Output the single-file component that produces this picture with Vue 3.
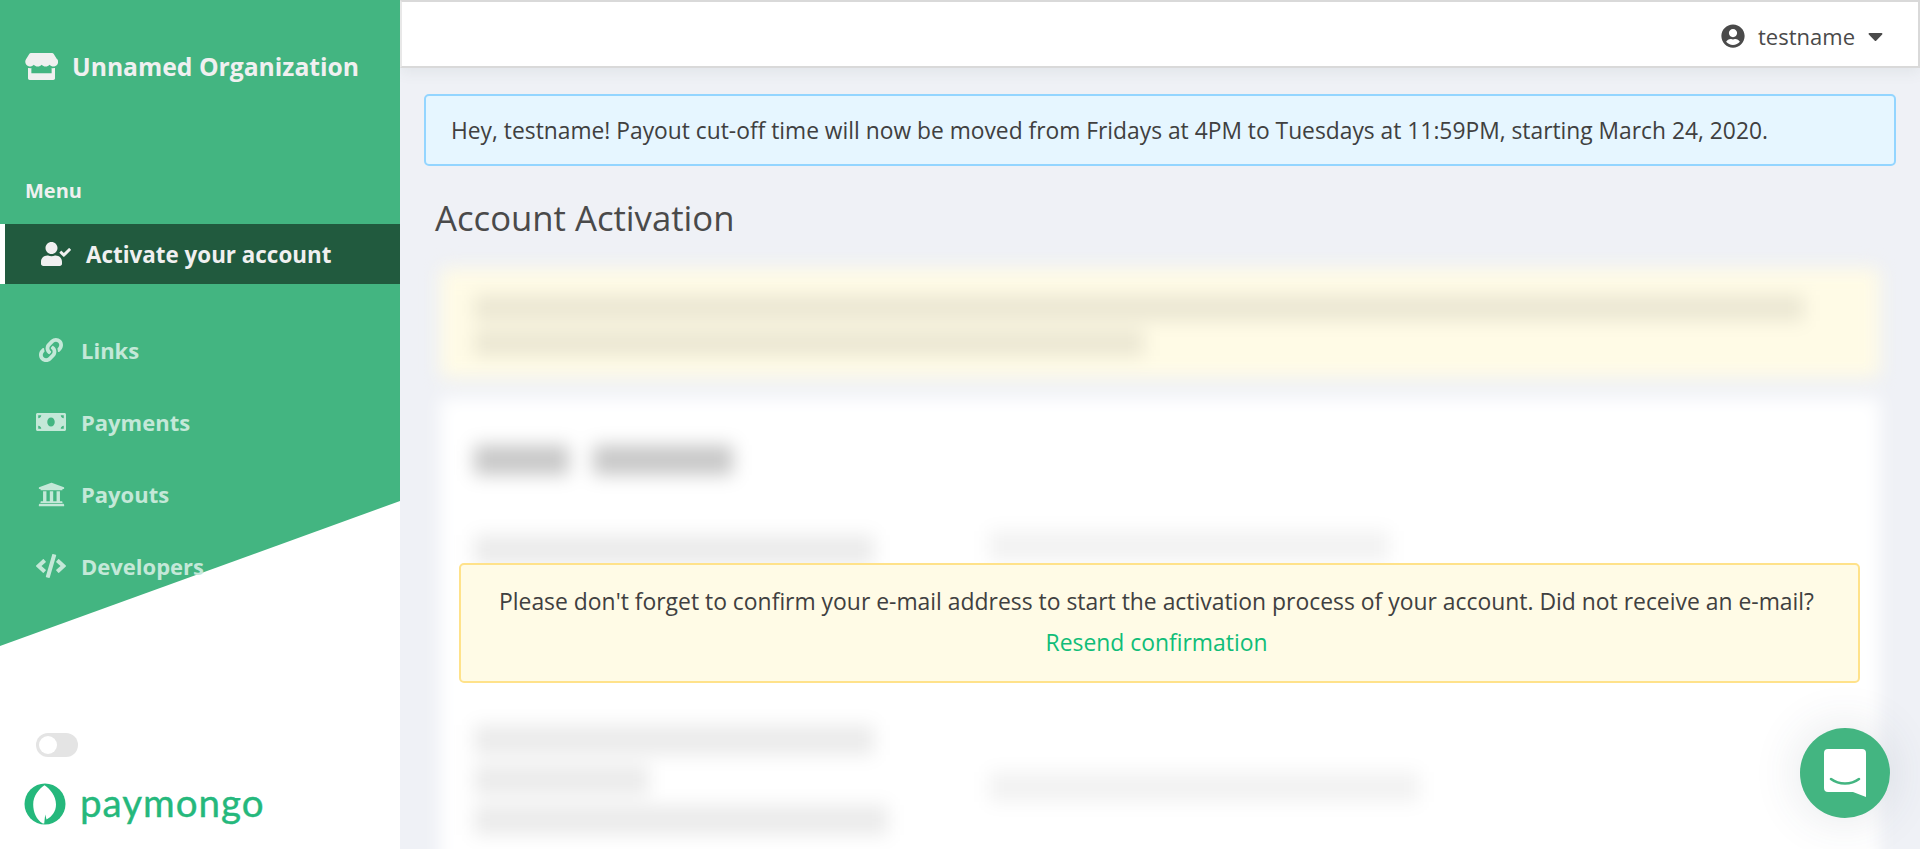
<script setup>
const navItems = [
  { label: 'Links', view: '0 0 512 512', w: 24, h: 24, d: 'M326.612 185.391c59.747 59.809 58.927 155.698.36 214.59-.11.12-.24.25-.36.37l-67.2 67.2c-59.27 59.27-155.699 59.262-214.96 0-59.27-59.26-59.27-155.7 0-214.96l37.106-37.106c9.84-9.84 26.786-3.3 27.294 10.606.648 17.722 3.826 35.527 9.69 52.721 1.986 5.822.567 12.262-3.783 16.612l-13.087 13.087c-28.026 28.026-28.905 73.66-1.155 101.96 28.024 28.579 74.086 28.749 102.325.51l67.2-67.19c28.191-28.191 28.073-73.757 0-101.83-3.701-3.694-7.429-6.564-10.341-8.569a16.037 16.037 0 0 1-6.947-12.606c-.396-10.567 3.348-21.456 11.698-29.806l21.054-21.055c5.521-5.521 14.182-6.199 20.584-1.731a152.482 152.482 0 0 1 20.522 17.197zM467.547 44.449c-59.261-59.262-155.69-59.27-214.96 0l-67.2 67.2c-.12.12-.25.25-.36.37-58.566 58.892-59.387 154.781.36 214.59a152.454 152.454 0 0 0 20.521 17.196c6.402 4.468 15.064 3.789 20.584-1.731l21.054-21.055c8.35-8.35 12.094-19.239 11.698-29.806a16.037 16.037 0 0 0-6.947-12.606c-2.912-2.005-6.64-4.875-10.341-8.569-28.073-28.073-28.191-73.639 0-101.83l67.2-67.19c28.239-28.239 74.3-28.069 102.325.51 27.75 28.3 26.872 73.934-1.155 101.96l-13.087 13.087c-4.35 4.35-5.769 10.79-3.783 16.612 5.864 17.194 9.042 34.999 9.69 52.721.509 13.906 17.454 20.446 27.294 10.606l37.106-37.106c59.271-59.259 59.271-155.699.001-214.959z' },
  { label: 'Payments', view: '0 0 640 512', w: 30, h: 24, d: 'M608 64H32C14.33 64 0 78.33 0 96v320c0 17.67 14.33 32 32 32h576c17.67 0 32-14.33 32-32V96c0-17.67-14.33-32-32-32zM48 400v-64c35.35 0 64 28.65 64 64H48zm0-224v-64h64c0 35.35-28.65 64-64 64zm272 176c-44.19 0-80-42.99-80-96 0-53.02 35.82-96 80-96s80 42.98 80 96c0 53.03-35.83 96-80 96zm272 48h-64c0-35.35 28.65-64 64-64v64zm0-224c-35.35 0-64-28.65-64-64h64v64z' },
  { label: 'Payouts', view: '0 0 512 512', w: 27, h: 27, d: 'M496 128v16a8 8 0 0 1-8 8h-24v12c0 6.627-5.373 12-12 12H60c-6.627 0-12-5.373-12-12v-12H24a8 8 0 0 1-8-8v-16a8 8 0 0 1 4.941-7.392l232-88a7.996 7.996 0 0 1 6.118 0l232 88A8 8 0 0 1 496 128zm-24 304H40c-13.255 0-24 10.745-24 24v16a8 8 0 0 0 8 8h464a8 8 0 0 0 8-8v-16c0-13.255-10.745-24-24-24zM96 192v192H60c-6.627 0-12 5.373-12 12v20h416v-20c0-6.627-5.373-12-12-12h-36V192h-64v192h-64V192h-64v192h-64V192H96z' },
  { label: 'Developers', view: '0 0 640 512', w: 30, h: 24, d: 'M278.9 511.5l-61-17.7c-6.4-1.8-10-8.5-8.2-14.9L346.2 8.7c1.8-6.4 8.5-10 14.9-8.2l61 17.7c6.4 1.8 10 8.5 8.2 14.9L293.8 503.3c-1.9 6.4-8.5 10.1-14.9 8.2zm-114-112.2l43.5-46.4c4.6-4.9 4.3-12.7-.8-17.2L117 256l90.6-79.7c5.1-4.5 5.5-12.3.8-17.2l-43.5-46.4c-4.5-4.8-12.1-5.1-17-.5L3.8 247.2c-5.1 4.7-5.1 12.8 0 17.5l144.1 135.1c4.9 4.6 12.5 4.4 17-.5zm327.2.6l144.1-135.1c5.1-4.7 5.1-12.8 0-17.5L492.1 112.1c-4.8-4.5-12.4-4.3-17 .5L431.6 159c-4.6 4.9-4.3 12.7.8 17.2L523 256l-90.6 79.7c-5.1 4.5-5.5 12.3-.8 17.2l43.5 46.4c4.5 4.9 12.1 5.1 17 .6z' }
]
</script>

<template>
  <div class="app">
    <aside class="sidebar">
      <div class="green-shape"></div>
      <div class="side-top">
        <div class="org">
          <svg class="store" viewBox="0 0 616 512"><path fill="currentColor" d="M602 118.6L537.1 15C531.3 5.7 521 0 510 0H106C95 0 84.7 5.7 78.9 15L14 118.6c-33.9 54.1-3.9 129.3 59.4 137.9 4.6.6 9.2.9 13.7.9 29.9 0 56.4-13.1 74.8-33.4 18.4 20.3 45 33.4 74.8 33.4 29.9 0 56.4-13.1 74.8-33.4 18.4 20.3 45 33.4 74.8 33.4 29.9 0 56.4-13.1 74.8-33.4 18.5 20.3 45 33.4 74.8 33.4 4.6 0 9.1-.3 13.7-.9 63.5-8.5 93.6-83.7 59.6-137.9zM529.5 288c-10 0-19.9-1.5-29.5-3.8V384H116v-99.8c-9.6 2.2-19.5 3.8-29.5 3.8-6 0-12.1-.4-18-1.2-5.6-.8-11.1-2.1-16.4-3.6V480c0 17.7 14.3 32 32 32h448c17.7 0 32-14.3 32-32V283.2c-5.4 1.6-10.8 2.9-16.4 3.6-6.1.8-12.1 1.2-18.2 1.2z"/></svg>
          <span>Unnamed Organization</span>
        </div>
        <div class="menu-label">Menu</div>
        <a class="active-item">
          <svg class="user-check" viewBox="0 0 640 512"><path fill="currentColor" d="M224 256c70.7 0 128-57.3 128-128S294.7 0 224 0 96 57.3 96 128s57.3 128 128 128zm89.6 32h-16.7c-22.2 10.2-46.9 16-72.9 16s-50.6-5.8-72.9-16h-16.7C60.2 288 0 348.2 0 422.4V464c0 26.5 21.5 48 48 48h352c26.5 0 48-21.5 48-48v-41.6c0-74.2-60.2-134.4-134.4-134.4zm323-128.4l-27.8-28.1c-4.6-4.7-12.1-4.7-16.8-.1l-104.8 104-45.5-45.8c-4.6-4.7-12.1-4.7-16.8-.1l-28.1 27.9c-4.7 4.6-4.7 12.1-.1 16.8l81.7 82.3c4.6 4.7 12.1 4.7 16.8.1l141.3-140.2c4.6-4.7 4.7-12.2.1-16.8z"/></svg>
          <span>Activate your account</span>
        </a>
        <nav class="nav">
          <a v-for="item in navItems" :key="item.label" class="nav-item">
            <span class="nav-icon">
              <svg :viewBox="item.view" :width="item.w" :height="item.h"><path fill="currentColor" :d="item.d"/></svg>
            </span>
            <span>{{ item.label }}</span>
          </a>
        </nav>
      </div>
      <div class="side-bottom">
        <div class="toggle"><div class="knob"></div></div>
        <div class="brand">
          <svg class="leaf" viewBox="0 0 42 42">
            <circle cx="21" cy="21" r="20.5" fill="#25b87c"/>
            <path fill="#fff" d="M20.500 2.200C26 6 32 12.500 32 21.500c0 7-4 12-9.500 15l-1.300-5-1 9h-1.400C12.500 37 9.200 29 9.200 21.500 9.200 12.500 15 6 20.500 2.200z"/>
          </svg>
          <span class="wordmark">paymongo</span>
        </div>
      </div>
    </aside>

    <main class="main">
      <header class="topbar">
        <div class="user">
          <svg class="user-icon" viewBox="0 0 496 512"><path fill="currentColor" d="M248 8C111 8 0 119 0 256s111 248 248 248 248-111 248-248S385 8 248 8zm0 96c48.600 0 88 39.400 88 88s-39.400 88-88 88-88-39.400-88-88 39.400-88 88-88zm0 344c-58.700 0-111.300-26.600-146.500-68.200 18.800-35.400 55.600-59.800 98.500-59.800 2.400 0 4.800.4 7.100 1.100 13 4.200 26.600 6.900 40.900 6.900 14.300 0 28-2.700 40.900-6.900 2.300-.7 4.700-1.100 7.100-1.100 42.900 0 79.700 24.400 98.500 59.800C359.300 421.400 306.700 448 248 448z"/></svg>
          <span>testname</span>
          <svg class="caret" viewBox="0 0 320 512"><path fill="currentColor" d="M31.300 192h257.300c17.800 0 26.700 21.500 14.100 34.100L174.100 354.800c-7.800 7.800-20.500 7.800-28.300 0L17.200 226.100C4.600 213.500 13.500 192 31.300 192z"/></svg>
        </div>
      </header>

      <section class="content">
        <div class="info">Hey, testname! Payout cut-off time will now be moved from Fridays at 4PM to Tuesdays at 11:59PM, starting March 24, 2020.</div>
        <h1 class="title">Account Activation</h1>

        <div class="blurred">
          <div class="y-card">
            <div class="y-line y-long"></div>
            <div class="y-line y-short"></div>
          </div>
          <div class="w-card">
            <div class="w-head"><i class="hb hb1"></i><i class="hb hb2"></i></div>
            <div class="row row-a">
              <div class="col-l"><i class="bar l1"></i></div>
              <div class="col-r"><i class="bar v1"></i></div>
            </div>
            <div class="row row-b">
              <div class="col-l"><i class="bar l1"></i><i class="bar l2"></i><i class="bar l3"></i></div>
              <div class="col-r center"><i class="bar v2"></i></div>
            </div>
          </div>
        </div>

        <div class="notice">
          <p>Please don't forget to confirm your e-mail address to start the activation process of your account. Did not receive an e-mail?</p>
          <a class="resend">Resend confirmation</a>
        </div>
      </section>
    </main>

    <button class="fab" aria-label="Chat">
      <svg viewBox="0 0 42 48" width="42" height="48">
        <path fill="#fff" d="M4 0h34a4 4 0 0 1 4 4v44l-13-5H4a4 4 0 0 1-4-4V4a4 4 0 0 1 4-4z"/>
        <path fill="none" stroke="#43b581" stroke-width="2.600" stroke-linecap="round" d="M7 30c8 6 20 6 28 0"/>
      </svg>
    </button>
  </div>
</template>

<style>
html, body { margin: 0; height: 100%; overflow: hidden; background: #eff1f6; }
</style>

<style scoped>
.app {
  display: flex;
  height: 849px;
  overflow: hidden;
  font-family: "Open Sans", "Noto Sans", sans-serif;
  color: #363636;
}
.sidebar {
  position: relative;
  width: 400px;
  flex: none;
  background: #fff;
  display: flex;
  flex-direction: column;
  justify-content: space-between;
}
.green-shape {
  position: absolute;
  inset: 0;
  background: #43b581;
  clip-path: polygon(0 0, 100% 0, 100% 501px, 0 646px);
}
.side-top, .side-bottom { position: relative; }
.org {
  display: flex;
  align-items: center;
  gap: 14px;
  height: 133px;
  padding-left: 25px;
  color: #f0f0f0;
  font-size: 24.7px;
  font-weight: 700;
}
.store { width: 33px; height: 27px; }
.menu-label {
  margin-top: 45px;
  padding-left: 25px;
  height: 46px;
  font-size: 20px;
  font-weight: 700;
  color: #f0f0f0;
  line-height: 26px;
}
.active-item {
  display: flex;
  align-items: center;
  height: 60px;
  background: #215a3e;
  border-left: 5px solid #fff;
  padding-left: 36px;
  gap: 15px;
  color: #f0f0f0;
  font-size: 22.4px;
  font-weight: 700;
}
.user-check { width: 30px; height: 24px; }
.nav { display: flex; flex-direction: column; padding-top: 30px; }
.nav-item {
  display: flex;
  align-items: center;
  height: 72px;
  padding-left: 36px;
  gap: 15px;
  color: #c4e8d8;
  font-size: 22px;
  font-weight: 700;
}
.nav-icon { width: 30px; display: flex; justify-content: center; }
.side-bottom { padding: 0 0 24px 24px; }
.toggle {
  width: 42px;
  height: 24px;
  margin-left: 12px;
  border-radius: 12px;
  background: #e4e4e4;
  display: flex;
  align-items: center;
  padding-left: 3px;
  box-sizing: border-box;
}
.knob { width: 18px; height: 18px; border-radius: 50%; background: #fff; }
.brand { display: flex; align-items: center; gap: 14px; margin-top: 26px; height: 42px; }
.leaf { width: 42px; height: 42px; }
.wordmark {
  font-family: "Lato", sans-serif;
  font-size: 38.5px;
  line-height: 38px;
  margin-bottom: 4px;
  color: #25b87c;
  letter-spacing: 1px;
  -webkit-text-stroke: 0.4px #25b87c;
}

.main { flex: 1; min-width: 0; display: flex; flex-direction: column; }
.topbar {
  flex: none;
  height: 68px;
  box-sizing: border-box;
  background: #fff;
  border: 2px solid #d9d9d9;
  border-left-color: #e8e8e8;
  display: flex;
  justify-content: flex-end;
  align-items: center;
  padding-right: 35px;
  box-shadow: 0 4px 14px rgba(60, 90, 80, 0.08);
}
.user { display: flex; align-items: center; gap: 13px; color: #4a4a4a; font-size: 22px; margin-top: 4px; }
.user-icon { width: 24px; height: 24px; }
.caret { width: 15px; height: 24px; }

.content { position: relative; flex: 1; padding: 26px 24px 0; min-height: 0; }
.info {
  box-sizing: border-box;
  height: 72px;
  display: flex;
  align-items: center;
  padding-left: 25px;
  background: #e6f6ff;
  border: 2px solid #93d5ff;
  border-radius: 5px;
  font-size: 22.8px;
  color: #404040;
}
.title {
  margin: 27px 0 0 11px;
  height: 75px;
  font-size: 34.7px;
  font-weight: 400;
  line-height: 50px;
  color: #4a4a4a;
}
.blurred { filter: blur(9px); margin: 0 16px 0 16px; }
.y-card {
  height: 110px;
  box-sizing: border-box;
  background: #fffbe6;
  padding: 27px 34px 0;
  border-radius: 5px;
}
.y-line { height: 26px; background: #ebe7d3; margin-bottom: 9px; }
.y-long { width: 1330px; }
.y-short { width: 670px; }
.w-card { margin-top: 20px; height: 480px; background: #fff; padding: 0 34px; }
.w-head { display: flex; gap: 24px; padding-top: 47px; height: 110px; box-sizing: border-box; }
.hb { display: block; height: 30px; background: #c8c8c8; }
.hb1 { width: 95px; }
.hb2 { width: 140px; }
.row { display: flex; }
.col-l { width: 430px; }
.col-r { flex: 1; margin-left: 85px; }
.center { display: flex; align-items: center; }
.bar { display: block; height: 30px; background: #ebebeb; margin-bottom: 10px; }
.row-a { margin-top: 27px; height: 190px; }
.l1 { width: 400px; }
.l2 { width: 175px; }
.l3 { width: 414px; }
.v1 { width: 400px; background: #f2f2f2; margin-top: -4px; }
.v2 { width: 430px; background: #f2f2f2; margin-top: 14px; }

.notice {
  position: absolute;
  left: 59px;
  top: 495px;
  width: 1401px;
  height: 120px;
  box-sizing: border-box;
  background: #fffbe6;
  border: 2px solid #ffe28a;
  border-radius: 5px;
  text-align: center;
  font-size: 22.9px;
  padding: 16px 6px 0 0;
}
.notice p { margin: 0; line-height: 41px; color: #404040; }
.resend { display: block; line-height: 41px; color: #10bd78; }

.fab {
  position: fixed;
  left: 1800px;
  top: 728px;
  width: 90px;
  height: 90px;
  border: 0;
  padding: 0;
  border-radius: 50%;
  background: #43b581;
  display: flex;
  align-items: center;
  justify-content: center;
  box-shadow: 0 0 50px rgba(60, 70, 90, 0.14);
}
</style>
